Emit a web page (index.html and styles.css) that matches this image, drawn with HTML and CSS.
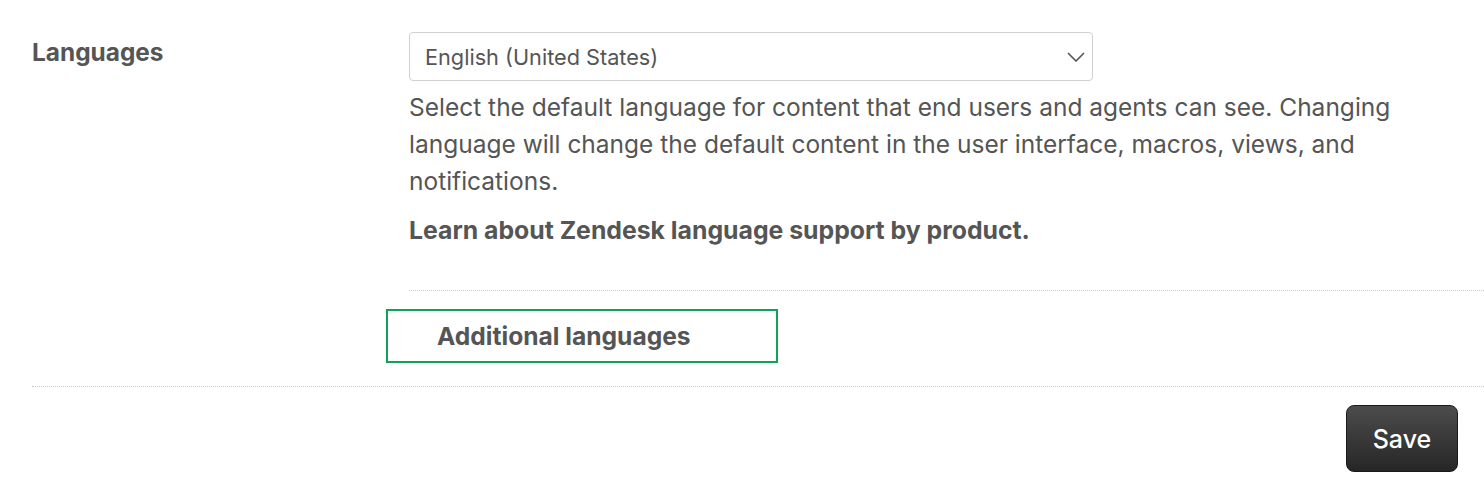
FILE: index.html
```html
<!DOCTYPE html>
<html>
<head>
<meta charset="utf-8">
<link rel="stylesheet" href="styles.css">
</head>
<body>
<div class="page">
  <div class="section">
    <div class="row">
      <div class="label">Languages</div>
      <div class="content">
        <div class="select">
          <span class="select-text">English (United States)</span>
          <svg class="chevron" width="18" height="10" viewBox="0 0 18 10"><path d="M1 1 L9 9 L17 1" fill="none" stroke="#555" stroke-width="1.6"/></svg>
        </div>
        <p class="desc">Select the default language for content that end users and agents can see. Changing language will change the default content in the user interface, macros, views, and notifications.</p>
        <p class="learn">Learn about Zendesk language support by product.</p>
        <div class="inner-sep"></div>
      </div>
    </div>
    <div class="additional-row">
      <div class="additional">Additional languages</div>
    </div>
  </div>
  <div class="footer">
    <button class="save">Save</button>
  </div>
</div>
</body>
</html>
```

FILE: styles.css
```css
html, body {
  margin: 0;
  padding: 0;
  background: #fff;
}
body {
  font-family: Inter, "Noto Sans", sans-serif;
  color: #555;
}
.page {
  padding-left: 32px;
}
.section {
  border-bottom: 1px dotted #c8c8c8;
  padding-bottom: 23px;
}
.row {
  display: flex;
  padding-top: 32px;
}
.label {
  width: 377px;
  flex: none;
  font-size: 24.4px;
  font-weight: 700;
  line-height: 40px;
}
.content {
  flex: 1;
}
.select {
  width: 684px;
  height: 49px;
  box-sizing: border-box;
  border: 1px solid #d0d0d0;
  border-radius: 4px;
  display: flex;
  align-items: center;
  justify-content: space-between;
  padding: 0 7px 0 15px;
  font-size: 21.7px;
}
.chevron {
  display: block;
}
.desc {
  margin: 8px 0 0;
  font-size: 24.5px;
  line-height: 37px;
  max-width: 1040px;
}
.learn {
  margin: 12px 0 0;
  font-size: 24.8px;
  font-weight: 700;
  line-height: 37px;
}
.inner-sep {
  margin-top: 41px;
  border-top: 1px dotted #c8c8c8;
}
.additional-row {
  padding-top: 18px;
  padding-left: 354px;
}
.additional {
  width: 392px;
  height: 54px;
  box-sizing: border-box;
  border: 2px solid #0fa35a;
  padding-left: 49px;
  display: flex;
  align-items: center;
  font-size: 24.6px;
  font-weight: 700;
}
.footer {
  display: flex;
  justify-content: flex-end;
  padding: 18px 26px 0 0;
}
.save {
  width: 112px;
  height: 67px;
  border: 1px solid #1a1a1a;
  border-radius: 8px;
  background: linear-gradient(#4c4c4c, #262626);
  color: #fff;
  font-family: Inter, "Noto Sans", sans-serif;
  font-size: 25px;
  font-weight: 500;
}
```
